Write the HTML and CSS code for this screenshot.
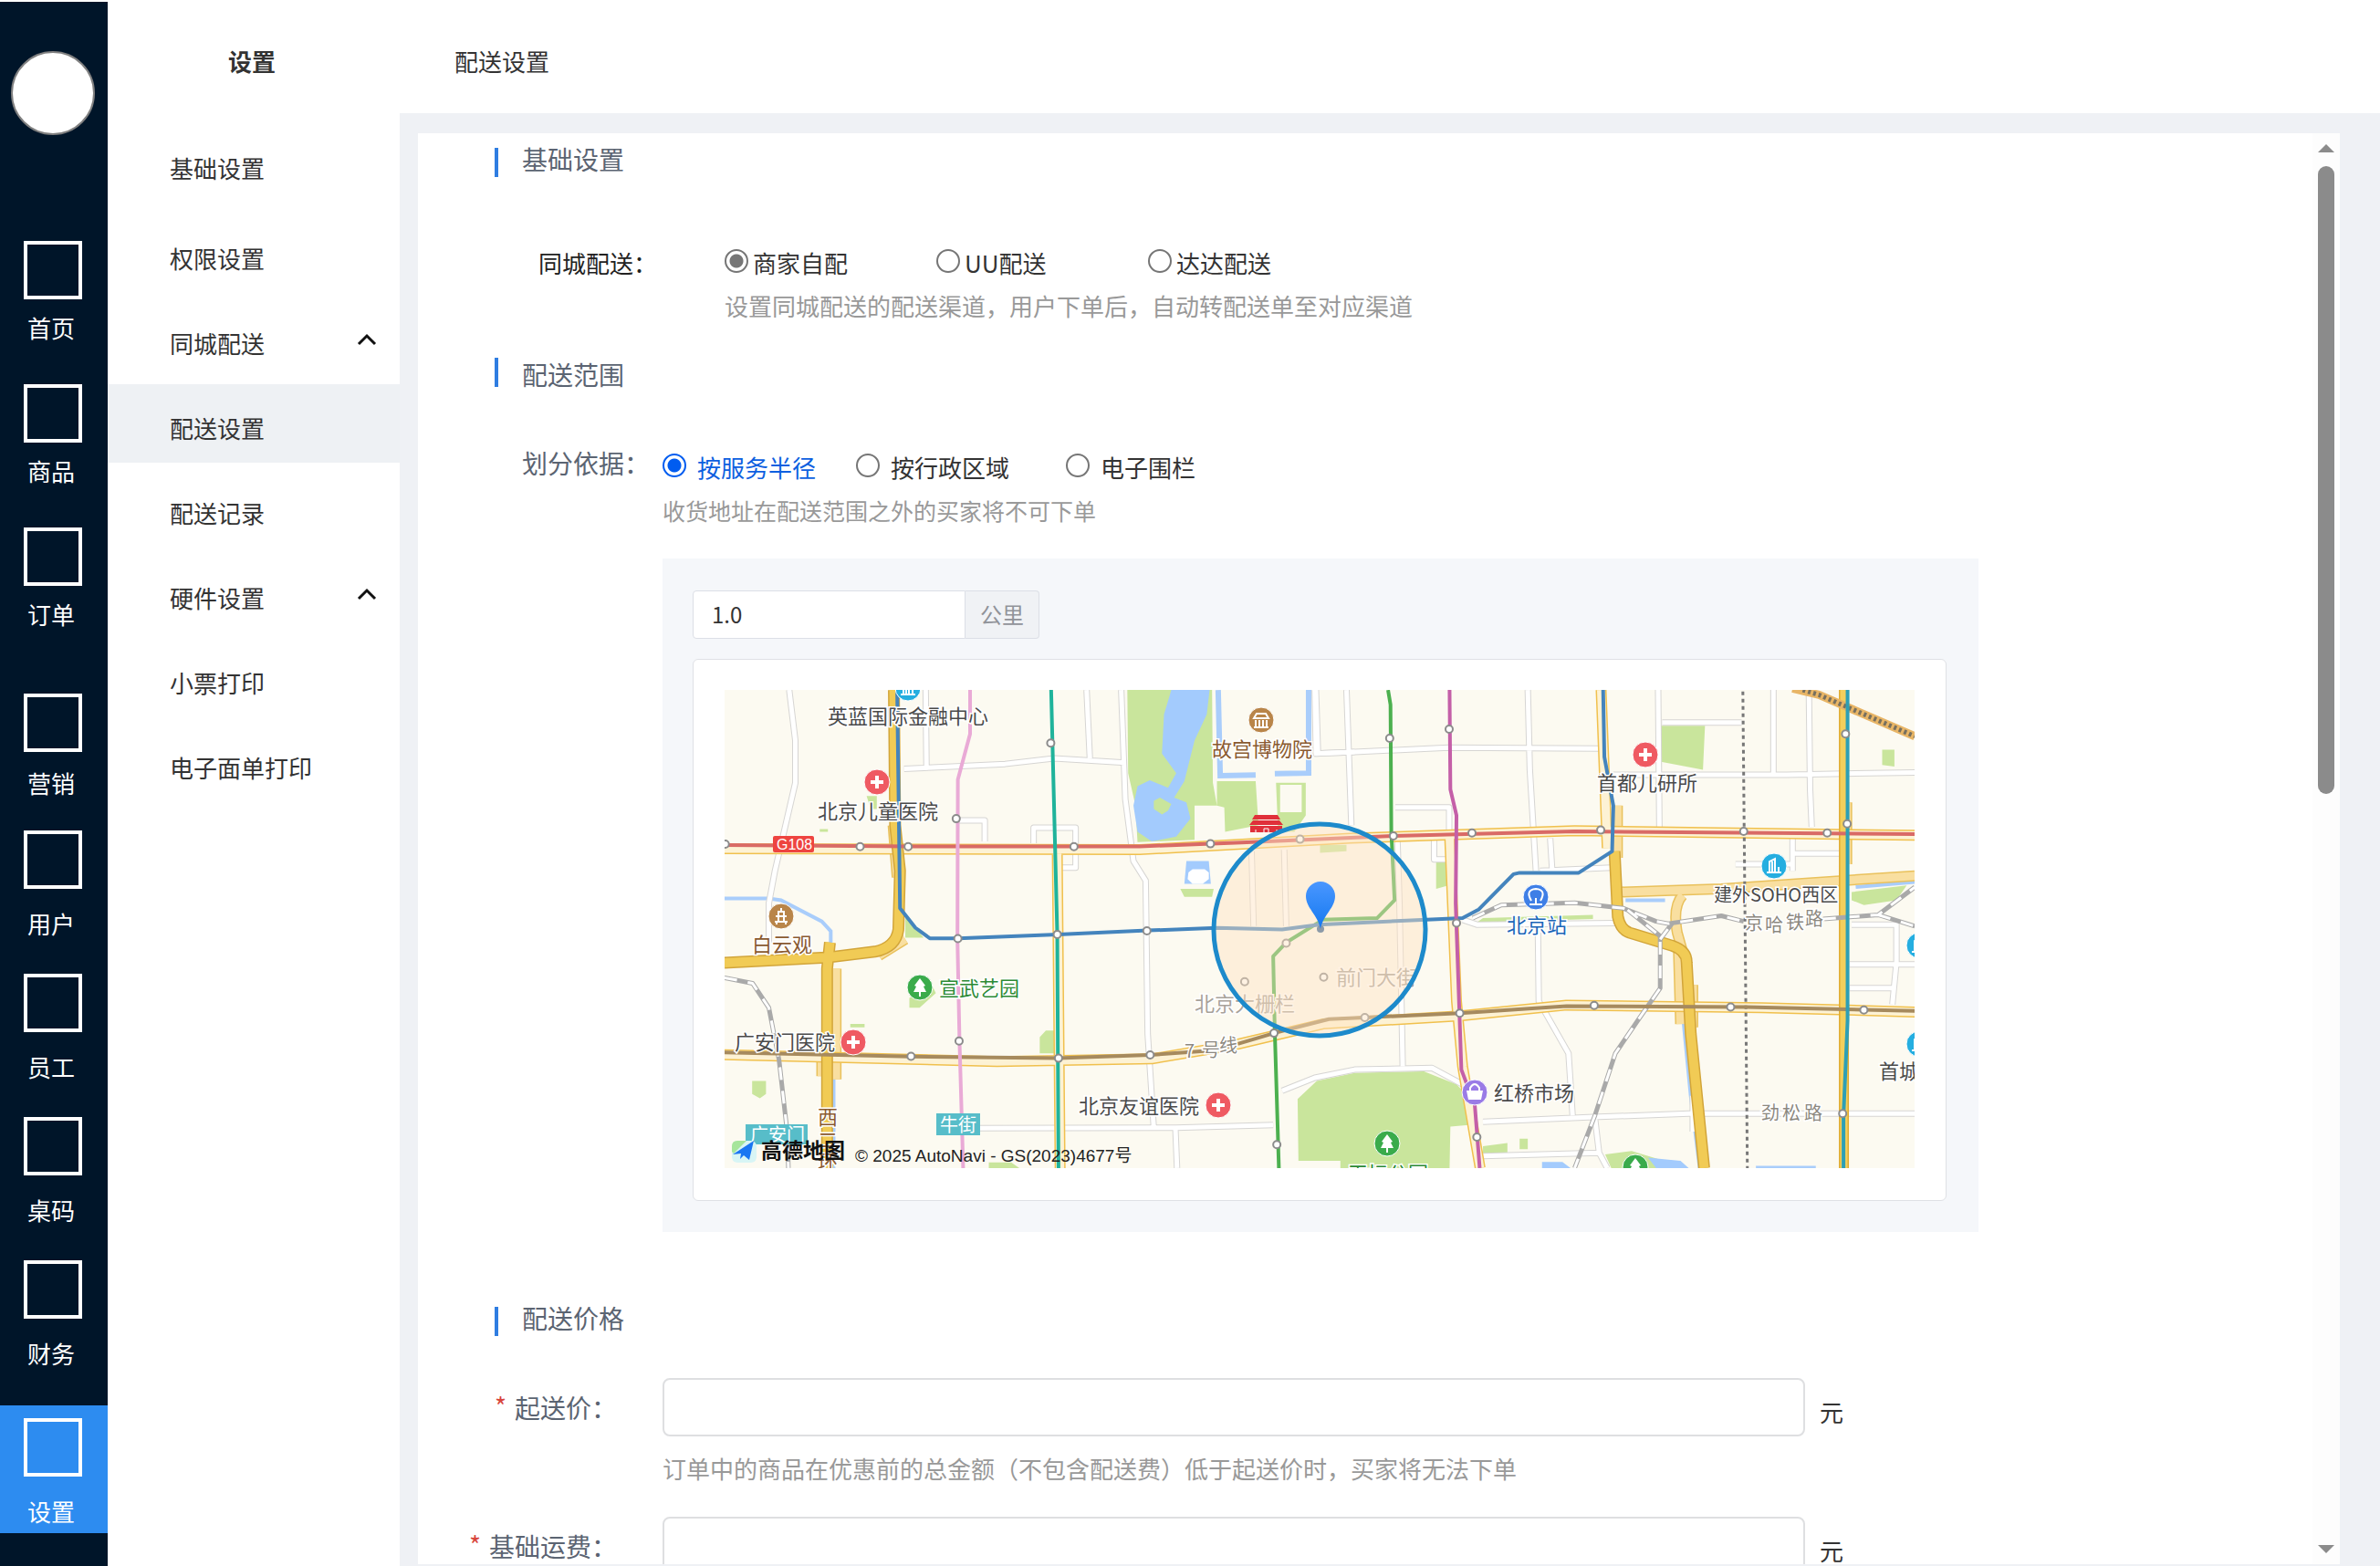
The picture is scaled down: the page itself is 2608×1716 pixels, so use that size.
FILE: index.html
```html
<!DOCTYPE html>
<html lang="zh-CN">
<head>
<meta charset="utf-8">
<title>配送设置</title>
<link rel="stylesheet" href="styles.css">
</head>
<body>
<div class="app">
  <nav class="rail">
    <div class="avatar"></div>
    <ul class="rail-group rail-group-a">
      <li><a class="rail-item" href="#"><span class="rail-icon"></span>首页</a></li>
      <li><a class="rail-item" href="#"><span class="rail-icon"></span>商品</a></li>
      <li><a class="rail-item" href="#"><span class="rail-icon"></span>订单</a></li>
    </ul>
    <ul class="rail-group rail-group-b">
      <li><a class="rail-item" href="#"><span class="rail-icon"></span>营销</a></li>
    </ul>
    <ul class="rail-group rail-group-c">
      <li><a class="rail-item" href="#"><span class="rail-icon"></span>用户</a></li>
      <li><a class="rail-item" href="#"><span class="rail-icon"></span>员工</a></li>
      <li><a class="rail-item" href="#"><span class="rail-icon"></span>桌码</a></li>
      <li><a class="rail-item" href="#"><span class="rail-icon"></span>财务</a></li>
    </ul>
    <ul class="rail-group rail-group-d">
      <li><a class="rail-item active" href="#"><span class="rail-icon"></span>设置</a></li>
    </ul>
  </nav>

  <aside class="submenu">
    <h1 class="submenu-title">设置</h1>
    <ul class="menu">
      <li class="menu-first"><a href="#">基础设置</a></li>
      <li><a href="#">权限设置</a></li>
      <li><a href="#">同城配送<svg class="chevron" viewBox="0 0 22 14"><path d="M2 12 11 3l9 9"/></svg></a></li>
      <li><a class="active" href="#">配送设置</a></li>
      <li><a href="#">配送记录</a></li>
      <li><a href="#">硬件设置<svg class="chevron" viewBox="0 0 22 14"><path d="M2 12 11 3l9 9"/></svg></a></li>
      <li><a href="#">小票打印</a></li>
      <li><a href="#">电子面单打印</a></li>
    </ul>
  </aside>

  <div class="content">
    <header class="topbar">配送设置</header>
    <main class="stage">
      <div class="panel">
        <form class="form">
          <h2 class="section-head head-basic"><span class="bar"></span>基础设置</h2>
          <div class="row row-channel">
            <span class="label-dark" id="channel">同城配送：</span>
            <div>
              <div class="radios channel-radios" role="radiogroup" aria-labelledby="channel">
                <label><input type="radio" name="channel" checked><span>商家自配</span></label>
                <label><input type="radio" name="channel"><span>UU配送</span></label>
                <label><input type="radio" name="channel"><span>达达配送</span></label>
              </div>
              <p class="hint hint-channel">设置同城配送的配送渠道，用户下单后，自动转配送单至对应渠道</p>
            </div>
          </div>

          <h2 class="section-head head-range"><span class="bar"></span>配送范围</h2>
          <div class="row row-range">
            <span class="label-range" id="basis">划分依据：</span>
            <div class="range-field">
              <div class="radios basis-radios" role="radiogroup" aria-labelledby="basis">
                <label><input type="radio" name="basis" checked><span>按服务半径</span></label>
                <label><input type="radio" name="basis"><span>按行政区域</span></label>
                <label><input type="radio" name="basis"><span>电子围栏</span></label>
              </div>
              <p class="hint hint-range">收货地址在配送范围之外的买家将不可下单</p>
              <div class="range-box">
                <div class="radius">
                  <input id="radius" type="text" value="1.0">
                  <label for="radius">公里</label>
                </div>
                <div class="map-card">
                  <svg class="city-map" viewBox="794 756 1304 524" role="img" aria-label="配送范围地图">
                    <defs>
                      <g id="minor">
                        <path d="M190 45 205 200V330L155 600 140 700V820M525 45 527 285M472 287 720 272 840 255 1015 268M920 45 928 255M1005 45 1015 380 1035 570 1065 630 1070 1100 1085 1390M605 445H670V510M790 515V468H893V590H855M640 1390 1140 1388 1378 1380M1138 1390 1142 1512M1400 1275 1480 1235 1578 1210 1768 1205 1850 1260M1480 45 1483 240 1578 235M1325 540 1330 770M1405 535 1410 770"/>
                        <path transform="translate(1478)" d="M80 45 92 460M0 240 100 235 330 222 700 225M5 45 10 240M525 45 530 290 545 600M200 405H332V480M295 505V565H325M580 500 585 600M845 45 848 465M855 145H1050M735 305H1160L1475 298M1128 45V300M1215 45 1218 350 1222 465M1175 500V600M1178 547H1290M1035 580H1175M205 505 210 700 218 1200M550 790 552 1000 625 1160 635 1350M415 1370 700 1355 920 1345H1475M415 1475 700 1465M690 1360 700 1465 720 1512M930 1290V1400M365 750 400 765 740 760M555 600 730 590M1320 765H1430V880L1420 1010M1315 887H1475M1315 960H1420"/>
                      </g>
                      <g id="lane">
                        <path d="M31 532 1050 535 1568 500 2118 477 2953 491M848 535 855 1512M31 1164 700 1185 1080 1177 1280 1135 1500 1070 1836 1045 2098 1012 2578 1020 2953 1033"/>
                        <path transform="translate(1478)" d="M333 490 350 1000 365 1200 408 1512M705 45 720 530"/>
                      </g>
                      <g id="express">
                        <path d="M447 45 450 460 462 600 458 780Q452 835 400 848L290 865 31 882M290 820 283 900V1512"/>
                        <path transform="translate(1478)" d="M738 540 746 740Q752 780 775 790L880 830Q915 845 915 880L925 1100 958 1512"/>
                      </g>
                      <g id="ramp">
                        <path d="M445 460 455 620M475 810 410 860M305 900V1240M270 1150V1230"/>
                        <path transform="translate(1478)" d="M755 665 1000 655 1475 615M905 675Q880 710 892 790L910 870M895 850 900 1070M930 950V1080M745 400V560M1308 390V580"/>
                      </g>
                      <g id="railway">
                        <path d="M31 928 100 945 140 1020 165 1180 185 1400 188 1512"/>
                        <path transform="translate(1478)" d="M390 745 460 705 640 698 760 715 840 755 870 762 1000 738 1055 755M1250 748 1385 735 1475 650M1385 735 1475 770M770 720 850 800V960L800 1050 740 1160 690 1350 640 1512M850 810 880 760"/>
                      </g>
                      <path id="stations" d="M33 518h0M364 526h0M482 526h0M889 526h0M1224 517h0M1444 503h0M600 440h0M604 808h0M848 795h0M1068 784h0M1410 822h0M832 208h0M607 1122h0M489 1169h0M851 1175h0M1076 1165h0M1380 1098h0M1387 1440h0M1308 940h0M1502 926h0M1664 193h0M1810 165h0M1673 493h0M1866 484h0M2182 475h0M2533 479h0M2738 484h0M2787 456h0M2783 180h0M1828 760h0M1836 1037h0M1603 1050h0M2166 1013h0M2501 1018h0M2828 1027h0M2776 1345h0M1878 1417h0"/>
                      <g id="hospital"><circle r="14" fill="#ef5a62" stroke="#fff"/><path d="M-7 0H7M0-7V7" stroke="#fff" stroke-width="4"/></g>
                      <g id="park"><circle r="14" fill="#3aab4b" stroke="#fff"/><path d="M0-10 6-2 4-1 7 5H1V10H-1V5H-7L-4-1-6-2Z" fill="#fff"/></g>
                      <g id="tower"><circle r="14" fill="#25aee0" stroke="#fff"/><path d="M-5 7V-5L1-8V7M5 7V1M-8 7H8M-2 7V-5" stroke="#fff" stroke-width="2" fill="none"/></g>
                      <g id="palace"><circle r="14" fill="#b98549" stroke="#fff"/><path d="M-8-2-5-7H5L8-2ZM-6 0V7M-2 0V7M2 0V7M6 0V7M-8 8H8" fill="none" stroke="#fff" stroke-width="2"/></g>
                      <g id="pagoda"><circle r="14" fill="#b98549" stroke="#fff"/><path d="M0-9V-6M-4-5H4M-6 0H6M-7 6H7M-3-5V6M3-5V6M-5 9V6M5 9V6" fill="none" stroke="#fff" stroke-width="2"/></g>
                      <linearGradient id="pin" x2="0" y2="1"><stop offset="0" stop-color="#4a97ff"/><stop offset="1" stop-color="#1478f0"/></linearGradient>
                    </defs>
                    <rect x="794" y="756" width="1304" height="524" fill="#fcfaf1"/>
                    <g class="geo" transform="translate(780 740) scale(.4464 .3571)">
                      <g class="green">
                        <path d="M1020 45H1228L1230 330 1240 400H1185V505L1045 512 1040 400 1022 300ZM1240 325H1335L1342 460 1260 480 1258 405 1240 400ZM1385 330H1458V430L1430 480H1390ZM1150 655H1232L1228 680H1160ZM99 1245H133V1285L118 1298 99 1285ZM820 1090H840V1160H805V1110ZM485 990 540 950 550 975 510 1020H485ZM475 735 520 805H475ZM265 472H285V480H265ZM380 370H405V410H390ZM340 1070H375V1080H340ZM680 1495H735L755 1512H680Z"/>
                        <path d="M1438 1300 1485 1245 1578 1220 1748 1215 1828 1255 1863 1300 1858 1380 1813 1385 1811 1512H1543V1490H1440Z"/>
                        <path transform="translate(1478)" d="M852 155H960L955 290 852 265ZM1395 228H1425V280L1395 275ZM300 570H330V645L300 655ZM415 745 685 735V748L400 758ZM1320 665 1455 645 1430 690 1350 705 1320 690ZM415 1445 475 1435V1465L415 1467ZM505 1422H525V1454H505ZM715 1470 780 1460 860 1490 850 1512H730ZM15 520H80V540L15 545Z"/>
                      </g>
                      <path class="water" d="M1128 45H1222L1215 120 1185 200 1160 325 1135 375 1165 390 1175 440 1140 495 1080 510 1045 480 1035 400 1045 340 1075 322 1120 345 1140 300 1105 240 1110 120ZM1165 570H1220L1225 640H1160ZM2298 1480 2378 1490 2398 1512H2318ZM2038 1493H2088L2108 1512H2038Z"/>
                      <path class="green" d="M1085 385 1100 375 1128 395 1120 415 1105 427 1085 410Z"/>
                      <path fill="#fff" d="M1170 605 1180 595H1210L1220 605V625L1205 640H1180L1168 625Z"/>
                      <path fill="#fcfaf1" d="M1395 336H1448V420H1395Z"/>
                      <path class="stream" stroke-width="6" d="M1243 45 1248 308 1335 306M1382 302 1465 300V45"/>
                      <path class="stream" stroke-width="4" d="M31 685H140L170 690 270 755 292 785V830M299 940V1512M2385 1060 2403 1290 2425 1512M2243 690 2340 690M2808 650 2953 634M2563 1511H2710"/>
                      <g class="line" stroke="#d6d5d3" stroke-width="7"><use href="#minor"/></g>
                      <g class="line" stroke="#fff" stroke-width="5"><use href="#minor"/></g>
                      <g class="line" stroke="#e9c15c" stroke-width="12"><use href="#ramp"/></g>
                      <g class="line" stroke="#f9dfa0" stroke-width="9"><use href="#ramp"/></g>
                      <g class="line" stroke="#f0c04d" stroke-width="12"><use href="#lane"/></g>
                      <g class="line" stroke="#fdf2d4" stroke-width="9"><use href="#lane"/></g>
                      <g class="line" stroke="#d2a53a" stroke-width="13"><use href="#express"/></g>
                      <g class="line" stroke="#f1cb55" stroke-width="10"><use href="#express"/></g>
                      <path class="line" stroke="#e0ab2e" stroke-width="11" d="M2779 45V1512"/>
                      <path class="line" stroke="#f3cf5c" stroke-width="8" d="M2779 45V1512"/>
                      <g class="line" stroke="#a9a9a9" stroke-width="5"><use href="#railway"/></g>
                      <g class="line" stroke="#fff" stroke-width="3" stroke-dasharray="14 12"><use href="#railway"/></g>
                      <path class="line" stroke="#e8b566" stroke-width="9" d="M2653 40 2718 60 2953 187"/>
                      <path class="line" stroke="#77705f" stroke-width="5" stroke-dasharray="3 3" d="M2678 45 2718 60 2953 187"/>
                      <path class="line" stroke="#777" stroke-width="3" stroke-dasharray="4 4" d="M2531 50 2542 1512"/>
                      <path class="metro" stroke="#d96a66" d="M31 521 500 525H1050L1300 513 1673 493 2118 479 2953 487"/>
                      <path class="metro" stroke="#a68a5e" d="M31 1157 490 1170 850 1175 1075 1165 1240 1150 1380 1098 1515 1055 1603 1050 1836 1037 2098 1015 2538 1018 2953 1030"/>
                      <path class="metro" stroke="#e9aad6" d="M634 45V180L604 320 603 808 608 1120 617 1512"/>
                      <path class="metro" stroke="#1fb39b" d="M833 45 848 795 851 1512"/>
                      <path class="metro" stroke="#4cb04f" d="M1660 45 1666 90 1668 480 1676 690 1633 745 1500 750 1410 820 1378 862 1382 1095 1392 1512"/>
                      <path class="metro" stroke="#4484bd" d="M455 45 462 715 500 775 535 807H605L850 795 1070 783 1240 775 1400 780 1490 765 1843 745 1883 718 1968 610 1983 606H2128L2210 540 2213 400 2191 250 2188 45"/>
                      <path class="metro" stroke="#c45fa8" d="M1811 45 1813 350 1828 430 1826 700 1840 1210 1873 1320 1885 1512"/>
                      <path class="metro" stroke="#2d9fb5" d="M2788 45V1060L2778 1350V1512"/>
                      <g class="dot" stroke="#8c8c8c" stroke-width="10"><use href="#stations"/></g>
                      <g class="dot" stroke="#fff" stroke-width="6"><use href="#stations"/></g>
                    </g>

                    <g class="names">
                      <rect x="847" y="916" width="45" height="18" rx="2" fill="#ee4440"/>
                      <text class="shield" x="851" y="931">G108</text>
                      <rect x="817" y="1232" width="68" height="22" fill="#57bdc9"/>
                      <text class="badge" x="822" y="1251">广安门</text>
                      <rect x="1026" y="1220" width="48" height="24" fill="#57bdc9"/>
                      <text class="badge" x="1030" y="1240">牛街</text>
                      <text x="907" y="793">英蓝国际金融中心</text>
                      <text x="896" y="897">北京儿童医院</text>
                      <text class="brown" x="1328" y="829">故宫博物院</text>
                      <text class="brown" x="824" y="1043">白云观</text>
                      <text class="leaf" x="1029" y="1091">宣武艺园</text>
                      <text x="805" y="1150">广安门医院</text>
                      <text x="1182" y="1220">北京友谊医院</text>
                      <text class="pale" x="1309" y="1108">北京大栅栏</text>
                      <text class="pale" x="1464" y="1079">前门大街</text>
                      <text class="road" x="1298 1317 1336" y="1159 1158 1153">7号线</text>
                      <text class="brown" x="896 896 896" y="1232 1257 1281">西二环</text>
                      <text x="1750" y="866">首都儿研所</text>
                      <text class="small" x="1878" y="988">建外SOHO西区</text>
                      <text class="road" x="1912 1934 1957 1978" y="1019 1021 1018 1014">京哈铁路</text>
                      <text class="blue" x="1651" y="1022">北京站</text>
                      <text x="1637" y="1206">红桥市场</text>
                      <text class="road" x="1930 1953 1977" y="1227">劲松路</text>
                      <text x="2059" y="1182">首城</text>
                      <text class="leaf" x="1477" y="1294">天坛公园</text>
                    </g>
                    <use href="#hospital" x="961" y="857"/><use href="#hospital" x="935" y="1142"/><use href="#hospital" x="1335" y="1211"/><use href="#hospital" x="1803" y="827"/>
                    <use href="#palace" x="1382" y="789"/><use href="#pagoda" x="856" y="1004"/>
                    <use href="#park" x="1008" y="1082"/><use href="#park" x="1520" y="1253"/><use href="#park" x="1792" y="1279"/>
                    <use href="#tower" x="995" y="754"/><use href="#tower" x="1944" y="949"/><use href="#tower" x="2103" y="1036"/><use href="#tower" x="2103" y="1144"/>
                    <circle cx="1683" cy="983" r="14" fill="#3f7fe6" stroke="#fff"/>
                    <path d="M1678 987Q1671 975 1683 974Q1695 975 1688 987M1676 991H1690M1683 991V984" fill="none" stroke="#fff" stroke-width="2"/>
                    <circle cx="1616" cy="1197" r="14" fill="#9a7be6" stroke="#fff"/>
                    <path d="M1607 1195H1625L1623 1205H1609Z" fill="#fff"/><path d="M1611 1196V1192Q1616 1184 1621 1192V1196" fill="none" stroke="#fff" stroke-width="2"/>
                    <path d="M1375 893H1400L1403 898H1372ZM1373 899H1402L1406 904H1369ZM1370 905H1405V912H1370Z" fill="#e0303a"/>
                    <path d="M1385 912V908H1390V912M1376 912V909M1399 912V909" stroke="#fff" fill="none"/>

                    <circle cx="1446" cy="1019" r="116" fill="#ffe2c2" fill-opacity=".45" stroke="#1d8acb" stroke-width="5"/>
                    <circle cx="1447" cy="1018" r="4" fill="#8c9aa8"/>
                    <path d="M1447 1018C1444 1002 1431 995 1431 982A16 16 0 0 1 1463 982C1463 995 1450 1002 1447 1018Z" fill="url(#pin)"/>

                    <rect x="802" y="1250" width="27" height="24" rx="6" fill="#d8f5f5"/>
                    <path d="M802 1262V1256Q802 1250 808 1250H818L804 1264Z" fill="#a6e59b"/>
                    <path d="M803 1265 826 1250 821 1271 815 1266 811 1270 812 1264Z" fill="#1a77f2"/>
                    <text class="brand" x="834" y="1269">高德地图</text>
                    <text class="copyright" x="937" y="1273">© 2025 AutoNavi - GS(2023)4677号</text>
                  </svg>
                </div>
              </div>
            </div>
          </div>

          <h2 class="section-head head-price"><span class="bar"></span>配送价格</h2>
          <div class="row row-price">
            <label class="label-price" for="min-price"><span class="star">*</span>起送价：</label>
            <div class="price-field">
              <div class="price-line"><input id="min-price" type="text"><span class="unit">元</span></div>
              <p class="hint hint-price">订单中的商品在优惠前的总金额（不包含配送费）低于起送价时，买家将无法下单</p>
            </div>
          </div>
          <div class="row row-fee">
            <label class="label-price" for="base-fee"><span class="star">*</span>基础运费：</label>
            <div class="price-field">
              <div class="price-line"><input id="base-fee" type="text"><span class="unit">元</span></div>
            </div>
          </div>
        </form>
        <div class="scrollbar" aria-hidden="true">
          <svg viewBox="0 0 18 9"><path d="M0 9 9 0l9 9Z"/></svg>
          <div class="track"><div class="thumb"></div></div>
          <svg viewBox="0 0 18 9"><path d="M0 0 9 9l9-9Z"/></svg>
        </div>
      </div>
    </main>
  </div>
</div>
</body>
</html>
```
FILE: styles.css
```css
* { box-sizing: border-box; }

body {
  margin: 0;
  background: #fff;
  color: #333;
  font: 26px/36px "Noto Sans CJK SC", sans-serif;
}

h1, h2, p, ul { margin: 0; padding: 0; font-weight: 400; }
ul { list-style: none; }
a { color: inherit; text-decoration: none; }

.app { display: flex; height: 100vh; overflow: hidden; }

/* dark icon rail */
.rail {
  flex: none;
  width: 118px;
  margin-top: 2px;
  padding-top: 54px;
  background: #001529;
  color: #fff;
  font-weight: 500;
}
.avatar {
  width: 92px;
  height: 92px;
  margin: 0 0 102px 12px;
  border: 2px solid #808080;
  border-radius: 50%;
  background: #fff;
}
.rail-group { display: flex; flex-direction: column; gap: 17px; }
.rail-group-b { margin-top: 42px; }
.rail-group-c { margin-top: 10px; }
.rail-group-d { margin-top: 33px; }
.rail-item {
  display: flex;
  flex-direction: column;
  gap: 20px;
  height: 140px;
  padding: 14px 0 0 26px;
  text-indent: 4px;
}
.rail-group-a .rail-item { gap: 13px; }
.rail-group-b .rail-item { gap: 16px; }
.rail-item.active { background: #2d8cf0; }
.rail-icon { width: 64px; height: 64px; border: 4px solid #fff; }

/* second-level menu */
.submenu { flex: none; width: 320px; }
.submenu-title {
  padding: 49px 0 51px 132px;
  font-size: 26px;
  font-weight: 700;
}
.menu { display: flex; flex-direction: column; gap: 7px; }
.menu-first { margin-bottom: 6px; }
.menu a {
  display: flex;
  align-items: center;
  justify-content: space-between;
  height: 86px;
  padding: 9px 25px 0 68px;
}
.menu a.active { background: #eef1f4; }
.chevron {
  width: 22px;
  height: 14px;
  margin-bottom: 8px;
  fill: none;
  stroke: #111;
  stroke-width: 3;
}

/* page */
.content { flex: 1; display: flex; flex-direction: column; min-width: 0; }
.topbar { flex: none; height: 124px; padding: 49px 60px 0; }
.stage { flex: 1; min-height: 0; padding: 22px 44px 2px 20px; background: #eff1f5; }
.panel { display: flex; height: 100%; overflow: hidden; background: #fff; }
.form { flex: 1; min-width: 0; padding: 8px 0 0 60px; }

.section-head {
  display: flex;
  gap: 26px;
  padding-left: 24px;
  color: #5b6472;
  font-size: 28px;
  line-height: 40px;
}
.bar { width: 4px; height: 32px; background: #2f7de1; }
.head-basic, .head-price { align-items: flex-end; }
.head-range { align-items: flex-start; margin-top: 39px; line-height: 36px; }
.head-price { margin-top: 74px; }

.row { display: grid; grid-template-columns: 208px 1fr; }
.row-channel { grid-template-columns: 276px 1fr; margin-top: 76px; }
.row-range { margin-top: 61px; }
.row-price { margin-top: 46px; }
.row-fee { margin-top: 35px; }

.label-dark { padding-left: 72px; color: #222; }
.label-range { padding-left: 54px; color: #5b6472; font-size: 28px; line-height: 36px; white-space: nowrap; }
.label-price {
  display: flex;
  gap: 9px;
  justify-content: flex-end;
  padding-right: 50px;
  color: #5b6472;
  font-size: 28px;
  line-height: 64px;
  white-space: nowrap;
}
.star { color: #d8453c; font-size: 28px; line-height: 60px; }

.radios { display: grid; }
.radios label { display: flex; }
.channel-radios { grid-template-columns: 232px 232px 1fr; }
.channel-radios label { gap: 5px; }
.basis-radios { grid-template-columns: 212px 230px 1fr; }
.basis-radios label { gap: 12px; }
input[type="radio"] {
  appearance: none;
  width: 26px;
  height: 26px;
  margin: 3px 0 0;
  border: 2px solid #767676;
  border-radius: 50%;
  background: #fff;
}
input[type="radio"]:checked { background: radial-gradient(circle, #767676 7px, #fff 8px); }
.basis-radios input[type="radio"]:checked {
  border-color: #005cf0;
  background: radial-gradient(circle, #005cf0 7px, #fff 8px);
}
.basis-radios input:checked + span { color: #0d5fe0; }

.hint { color: #999; }
.hint-channel { margin-top: 11px; }
.hint-range { margin-top: 11px; font-size: 25px; }
.hint-price { margin-top: 17px; }

.range-field { padding-top: 5px; }
.range-box {
  max-width: 1442px;
  margin-top: 35px;
  padding: 35px 35px 34px 33px;
  background: #f5f7fa;
}
.radius { display: flex; height: 53px; color: #909399; font-size: 24px; line-height: 50px; }
.radius input {
  width: 299px;
  padding: 0 20px 2px;
  border: 1px solid #dcdfe6;
  border-radius: 4px 0 0 4px;
  background: #fff;
  color: #333;
  font: inherit;
}
.radius label {
  padding: 0 16px;
  border: 1px solid #dcdfe6;
  border-left: 0;
  border-radius: 0 4px 4px 0;
  background: #f0f2f5;
}
.map-card {
  margin-top: 22px;
  padding: 33px 34px 35px;
  border: 1px solid #dfe1e5;
  border-radius: 6px;
  background: #fff;
}
.price-line { display: flex; gap: 16px; max-width: 1294px; }
.price-line input {
  flex: 1;
  min-width: 0;
  height: 64px;
  padding: 0 20px;
  border: 2px solid #dedfe1;
  border-radius: 8px;
  background: #fff;
  font: inherit;
}
.unit { align-self: flex-end; line-height: 54px; }

.scrollbar {
  flex: none;
  display: flex;
  flex-direction: column;
  gap: 15px;
  width: 30px;
  padding: 12px 6px;
  background: #fdfdfd;
}
.scrollbar svg { display: block; width: 18px; height: 9px; fill: #8b8b8b; }
.track { flex: 1; }
.thumb { height: 46%; border-radius: 9px; background: #8b8b8b; }

/* map */
.city-map { display: block; width: 100%; }
.city-map path { vector-effect: non-scaling-stroke; }
.green { fill: #c9e59c; }
.water { fill: #a3cbfd; }
.stream { fill: none; stroke: #a9cdfb; }
.line { fill: none; stroke-linejoin: round; }
.metro { fill: none; stroke-width: 4; stroke-linejoin: round; }
.dot { fill: none; stroke-linecap: round; }
.names text {
  fill: #4a4a4a;
  stroke: #fff;
  stroke-width: 3;
  paint-order: stroke;
  font-size: 22px;
}
.names .brown { fill: #8a5a30; }
.names .leaf { fill: #2c8a35; }
.names .blue { fill: #1b66b8; }
.names .pale { fill: #a8a29a; }
.names .road { fill: #8c8880; font-size: 20px; }
.names .small { font-size: 20px; }
.names .badge { fill: #fff; stroke: none; font-size: 20px; }
.names .shield { fill: #fff; stroke: none; font: 16px "Liberation Sans", sans-serif; }
.brand { fill: #111; font-size: 23px; font-weight: 700; }
.copyright { fill: #222; font: 19px "Liberation Sans", "Noto Sans CJK SC", sans-serif; }
```
